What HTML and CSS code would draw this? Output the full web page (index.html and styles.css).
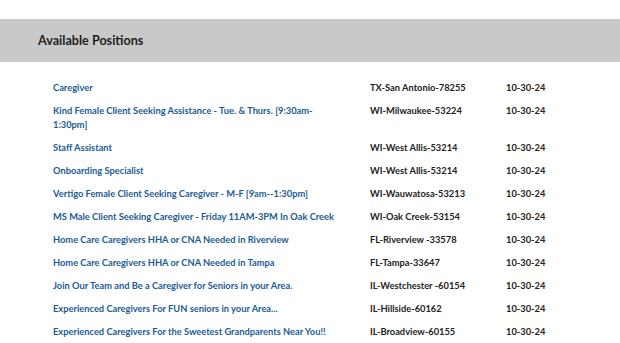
FILE: index.html
```html
<!DOCTYPE html>
<html>
<head>
<meta charset="utf-8">
<link rel="stylesheet" href="styles.css">
</head>
<body>
<header class="band"><h1 class="band-title">Available Positions</h1></header>
<div class="jobs">
  <div class="job"><a class="job-title" href="#">Caregiver</a><span class="job-loc">TX-San Antonio-78255</span><span class="job-date">10-30-24</span></div>
  <div class="job"><a class="job-title" href="#">Kind Female Client Seeking Assistance - Tue. &amp; Thurs. [9:30am-1:30pm]</a><span class="job-loc">WI-Milwaukee-53224</span><span class="job-date">10-30-24</span></div>
  <div class="job"><a class="job-title" href="#">Staff Assistant</a><span class="job-loc">WI-West Allis-53214</span><span class="job-date">10-30-24</span></div>
  <div class="job"><a class="job-title" href="#">Onboarding Specialist</a><span class="job-loc">WI-West Allis-53214</span><span class="job-date">10-30-24</span></div>
  <div class="job"><a class="job-title" href="#">Vertigo Female Client Seeking Caregiver - M-F [9am--1:30pm]</a><span class="job-loc">WI-Wauwatosa-53213</span><span class="job-date">10-30-24</span></div>
  <div class="job"><a class="job-title" href="#">MS Male Client Seeking Caregiver - Friday 11AM-3PM In Oak Creek</a><span class="job-loc">WI-Oak Creek-53154</span><span class="job-date">10-30-24</span></div>
  <div class="job"><a class="job-title" href="#">Home Care Caregivers HHA or CNA Needed in Riverview</a><span class="job-loc">FL-Riverview -33578</span><span class="job-date">10-30-24</span></div>
  <div class="job"><a class="job-title" href="#">Home Care Caregivers HHA or CNA Needed in Tampa</a><span class="job-loc">FL-Tampa-33647</span><span class="job-date">10-30-24</span></div>
  <div class="job"><a class="job-title" href="#">Join Our Team and Be a Caregiver for Seniors in your Area.</a><span class="job-loc">IL-Westchester -60154</span><span class="job-date">10-30-24</span></div>
  <div class="job"><a class="job-title" href="#">Experienced Caregivers For FUN seniors in your Area...</a><span class="job-loc">IL-Hillside-60162</span><span class="job-date">10-30-24</span></div>
  <div class="job"><a class="job-title" href="#">Experienced Caregivers For the Sweetest Grandparents Near You!!</a><span class="job-loc">IL-Broadview-60155</span><span class="job-date">10-30-24</span></div>
</div>
</body>
</html>
```
FILE: styles.css
```css
html, body { margin: 0; padding: 0; background: #fff; }
body { font-family: Lato, "Open Sans", sans-serif; }
.band {
  margin-top: 19px;
  height: 43px;
  background: #c9c9c9;
  display: flex;
  align-items: center;
  padding-left: 38px;
  padding-bottom: 1px;
  box-sizing: border-box;
}
.band-title {
  margin: 0;
  font-size: 12.6px;
  font-weight: 700;
  color: #1e1e1e;
}
.jobs { padding: 14px 0 0 53px; }
.job {
  display: grid;
  grid-template-columns: 290px 109px 1fr;
  column-gap: 27px;
  padding: 4.5px 0;
  font-size: 9.3px;
  line-height: 14px;
}
.job-title { color: #1b5b97; font-weight: 700; text-decoration: none; }
.job-loc, .job-date { color: #222; font-weight: 700; white-space: nowrap; }
```
